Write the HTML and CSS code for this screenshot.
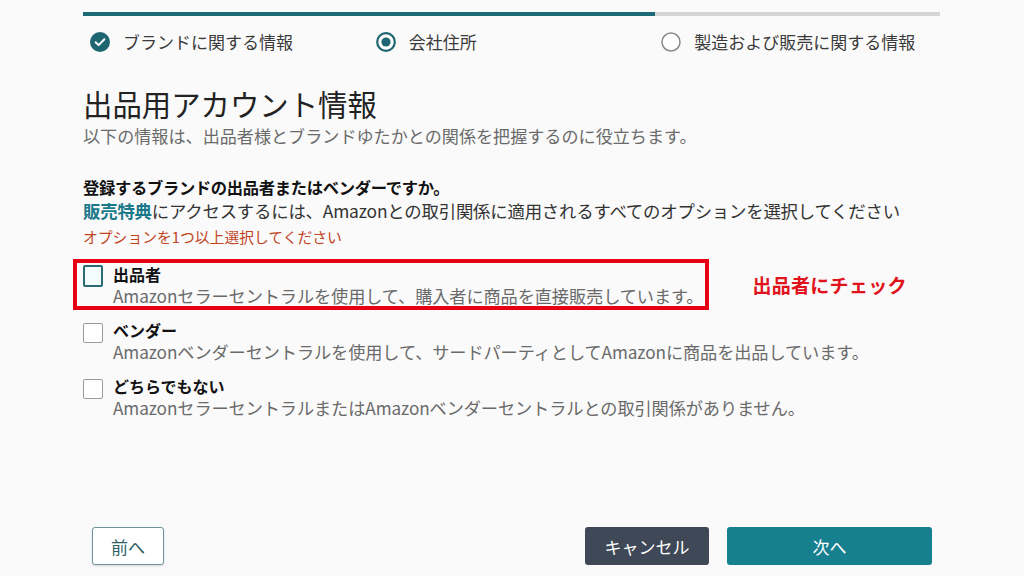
FILE: index.html
```html
<!DOCTYPE html>
<html lang="ja">
<head>
    <meta charset="UTF-8">
    <meta name="viewport" content="width=device-width, initial-scale=1.0">
    <title>出品用アカウント情報</title>
    <link rel="stylesheet" href="styles.css">
</head>
<body>
    <div class="page">
        <div class="progress">
            <div class="progress-fill"></div>
        </div>

        <ol class="steps">
            <li class="step">
                <svg class="step-icon" viewBox="0 0 20 20">
                    <circle cx="10" cy="10" r="10" fill="#1d6571"/>
                    <path d="M5.6 10.2 L8.6 13.1 L14.4 7.2" fill="none" stroke="#fff" stroke-width="2" stroke-linecap="round" stroke-linejoin="round"/>
                </svg>
                <span>ブランドに関する情報</span>
            </li>
            <li class="step">
                <svg class="step-icon" viewBox="0 0 20 20">
                    <circle cx="10" cy="10" r="8.8" fill="#fff" stroke="#1d6571" stroke-width="2.2"/>
                    <circle cx="10" cy="10" r="4.6" fill="#1d6571"/>
                </svg>
                <span>会社住所</span>
            </li>
            <li class="step">
                <svg class="step-icon" viewBox="0 0 20 20">
                    <circle cx="10" cy="10" r="9" fill="#fff" stroke="#8a8a8a" stroke-width="1.5"/>
                </svg>
                <span>製造および販売に関する情報</span>
            </li>
        </ol>

        <h1 class="title">出品用アカウント情報</h1>
        <p class="subtitle">以下の情報は、出品者様とブランドゆたかとの関係を把握するのに役立ちます。</p>

        <p class="question">登録するブランドの出品者またはベンダーですか。</p>
        <p class="hint"><span class="hint-link">販売特典</span>にアクセスするには、Amazonとの取引関係に適用されるすべてのオプションを選択してください</p>
        <p class="error">オプションを1つ以上選択してください</p>

        <div class="highlight-row">
            <div class="highlight">
                <label class="option">
                    <span class="checkbox checkbox-focus"></span>
                    <span class="option-text">
                        <span class="option-label">出品者</span>
                        <span class="option-desc">Amazonセラーセントラルを使用して、購入者に商品を直接販売しています。</span>
                    </span>
                </label>
            </div>
            <span class="note">出品者にチェック</span>
        </div>

        <label class="option option-plain">
            <span class="checkbox"></span>
            <span class="option-text">
                <span class="option-label">ベンダー</span>
                <span class="option-desc">Amazonベンダーセントラルを使用して、サードパーティとしてAmazonに商品を出品しています。</span>
            </span>
        </label>

        <label class="option option-plain option-last">
            <span class="checkbox"></span>
            <span class="option-text">
                <span class="option-label">どちらでもない</span>
                <span class="option-desc">AmazonセラーセントラルまたはAmazonベンダーセントラルとの取引関係がありません。</span>
            </span>
        </label>

        <div class="actions">
            <button class="btn btn-back">前へ</button>
            <div class="actions-right">
                <button class="btn btn-cancel">キャンセル</button>
                <button class="btn btn-next">次へ</button>
            </div>
        </div>
    </div>
</body>
</html>
```

FILE: styles.css
```css
body {
    margin: 0;
    padding: 0;
    background-color: #fafafa;
    font-family: "Noto Sans CJK JP", "Noto Sans", sans-serif;
    color: #333;
}

.page {
    width: 857px;
    margin-left: 83px;
    min-height: 576px;
    box-sizing: border-box;
    padding-bottom: 11px;
    display: flex;
    flex-direction: column;
}

.progress {
    margin-top: 12px;
    height: 4px;
    background-color: #d6d6d6;
}

.progress-fill {
    width: 572px;
    height: 100%;
    background-color: #1a6b76;
}

.steps {
    list-style: none;
    margin: 16px 0 0;
    padding: 0;
    display: grid;
    grid-template-columns: repeat(3, 1fr);
}

.step {
    display: flex;
    align-items: center;
    gap: 13px;
    padding-left: 7px;
    height: 20px;
    font-size: 17px;
    line-height: 20px;
    color: #3a3a3a;
}

.step-icon {
    width: 20px;
    height: 20px;
    flex-shrink: 0;
}

.title {
    margin: 33px 0 0;
    font-size: 29.4px;
    line-height: 36px;
    font-weight: 400;
    color: #222;
}

.subtitle {
    margin: 4px 0 0;
    font-size: 17.1px;
    line-height: 22px;
    color: #6a6a6a;
}

.question {
    margin: 28px 0 0;
    font-size: 16.3px;
    line-height: 24px;
    font-weight: 700;
    color: #111;
    letter-spacing: -0.3px;
}

.hint {
    margin: 0;
    font-size: 17.4px;
    line-height: 24px;
    color: #333;
    letter-spacing: -0.2px;
}

.hint-link {
    color: #19798a;
    font-weight: 700;
}

.error {
    margin: 2px 0 0;
    font-size: 14.8px;
    line-height: 24px;
    color: #c2431f;
}

.highlight-row {
    margin: 10px 0 0 -10px;
    display: flex;
    align-items: center;
}

.highlight {
    border: 4px solid #e60012;
    padding: 1px 2px 0 6px;
}

.note {
    margin-left: 43px;
    font-size: 19px;
    font-weight: 700;
    color: #e0121b;
    letter-spacing: 0.3px;
}

.option {
    display: flex;
    align-items: flex-start;
    gap: 10px;
}

.option-plain {
    margin-top: 10px;
}

.option-last {
    margin-top: 14px;
}

.checkbox {
    width: 20px;
    height: 20px;
    margin-top: 3px;
    box-sizing: border-box;
    border: 1px solid #9a9a9a;
    border-radius: 2px;
    background-color: #fff;
    flex-shrink: 0;
}

.checkbox-focus {
    height: 22px;
    margin-top: 1px;
    border: 2px solid #2a6a72;
    background-color: #f3fcfc;
}

.option-text {
    display: flex;
    flex-direction: column;
}

.option-label {
    font-size: 16px;
    line-height: 21px;
    font-weight: 700;
    color: #111;
}

.option-desc {
    font-size: 17.2px;
    line-height: 21px;
    color: #6a6a6a;
    letter-spacing: -0.1px;
}

.actions {
    margin-top: auto;
    display: flex;
    justify-content: space-between;
    align-items: center;
    padding: 0 8px 0 9px;
}

.actions-right {
    display: flex;
    gap: 18px;
}

.btn {
    height: 38px;
    font-family: inherit;
    font-size: 17px;
    border-radius: 3px;
    cursor: pointer;
}

.btn-back {
    width: 72px;
    background-color: #fff;
    border: 1px solid #6d9499;
    color: #2f5f66;
    box-shadow: 0 1px 2px rgba(0, 0, 0, 0.15);
}

.btn-cancel {
    width: 124px;
    background-color: #3e4856;
    border: none;
    color: #fff;
}

.btn-next {
    width: 205px;
    background-color: #17808f;
    border: none;
    color: #fff;
}
```
